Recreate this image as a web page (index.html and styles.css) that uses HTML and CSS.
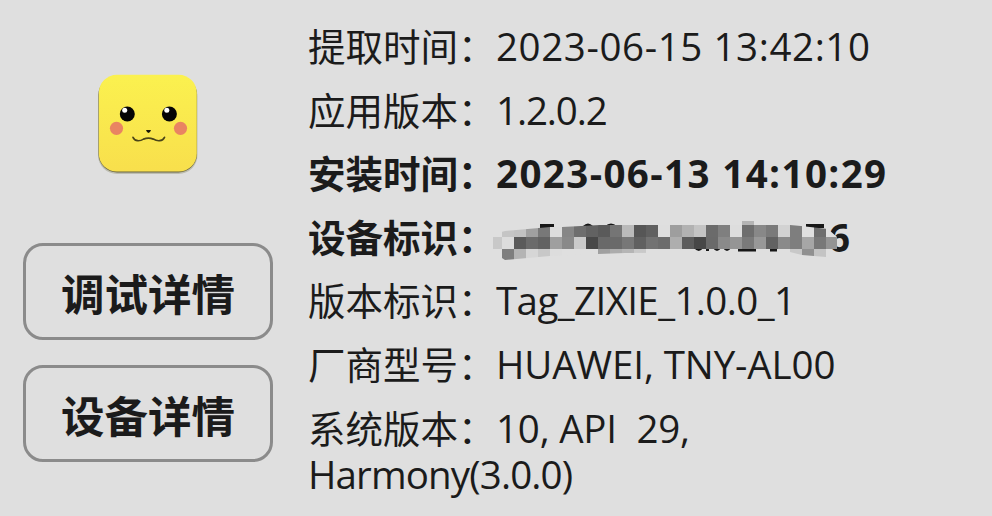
FILE: index.html
```html
<!DOCTYPE html>
<html lang="zh-CN">
<head>
<meta charset="utf-8">
<title>应用详情</title>
<link rel="stylesheet" href="styles.css">
</head>
<body>
<main class="card">
  <aside class="side">
    <svg class="app-icon" viewBox="0 0 104 104" aria-hidden="true">
      <defs>
        <linearGradient id="face" x1="0" y1="0" x2="0" y2="1"><stop offset="0" stop-color="#fbf14f"/><stop offset="1" stop-color="#f8df4c"/></linearGradient>
      </defs>
      <rect x="2" y="4" width="99.5" height="97" rx="19" fill="#bdbdb0"/>
      <rect x="2.5" y="3" width="98.5" height="96.5" rx="18.5" fill="#67633f"/>
      <rect x="2.8" y="1.8" width="98" height="96.8" rx="18" fill="url(#face)"/>
      <circle cx="31.3" cy="41" r="7.5" fill="#050505"/><circle cx="73.4" cy="41" r="7.5" fill="#050505"/>
      <circle cx="28.7" cy="37.3" r="2.5" fill="#fff"/><circle cx="70.8" cy="37.3" r="2.5" fill="#fff"/>
      <circle cx="20.5" cy="55.3" r="6.6" fill="#e98462"/><circle cx="84.5" cy="55.3" r="6.6" fill="#e98462"/>
      <path d="M50 57h5l-1 2-1.5 1-1.5-1z" fill="#17150a"/>
      <path d="M37 64.3c2 4.5 7 4 10.5 1.8q5-2 9.8 0c4 2.400 9.200 2.500 11.200-1.800" fill="none" stroke="#4a4418" stroke-width="1.7" stroke-linecap="round"/>
    </svg>
    <button class="action">调试详情</button>
    <button class="action">设备详情</button>
  </aside>
  <section class="info">
    <div class="row"><span class="label">提取时间：</span><span class="value date">2023-06-15 13:42:10</span></div>
    <div class="row"><span class="label">应用版本：</span><span class="value version">1.2.0.2</span></div>
    <div class="row strong"><span class="label">安装时间：</span><span class="value date">2023-06-13 14:10:29</span></div>
    <div class="row strong"><span class="label">设备标识：</span><span class="value masked"><span>6</span>
      <svg class="mosaic" viewBox="490 210 350 60" shape-rendering="crispEdges" aria-hidden="true">
        <defs><clipPath id="stroke"><path d="M493 249V236L498 233 505 231 550 227 562 227 600 225H790L801 226 828 229 837 237V249L826 250V257L802 255 790 252 625 253 598 254 550 256 505 260 502 258V249Z"/></clipPath></defs>
        <g fill="#171717" shape-rendering="auto"><path d="M540 224h14v4h-14zM806 224h18v4h-18zM738 249h18v2.500h-18zM770 249h7v2.500h-7z"/><path d="M583 226q5-5 10 0zM605 226q6-5 12 0zM694 248q5 6 9 0h3v3h3v-3h4q4 6 8 0h2q4 6 8 0z"/></g>
        <g clip-path="url(#stroke)" id="tiles"></g>
        <path d="M742 221h12v4h-12z" fill="#b4b4b4"/>
      </svg></span></div>
    <div class="row"><span class="label">版本标识：</span><span class="value tag">Tag_ZIXIE_1.0.0_1</span></div>
    <div class="row"><span class="label">厂商型号：</span><span class="value model">HUAWEI, TNY-AL00</span></div>
    <div class="row last"><span class="label">系统版本：</span><span class="value system">10, API&nbsp; 29,</span></div>
    <div class="row harmony">Harmony(3.0.0)</div>
  </section>
</main>
<script src="mosaic.js"></script>
</body>
</html>
```
FILE: styles.css
```css
* { box-sizing: border-box; }
body { margin: 0; background: #dfdfdf; color: #1b1b1b; font-family: "Open Sans", "Noto Sans CJK SC", sans-serif; }
.card { display: flex; width: 992px; height: 516px; overflow: hidden; }
.side { width: 308px; flex: none; padding: 72px 0 0 23px; display: flex; flex-direction: column; }
.app-icon { width: 104px; height: 104px; margin: 1px 0 66px 73px; flex: none; }
.action { width: 250px; height: 97px; flex: none; margin: 0 0 25px; padding: 2px 0 0; border: 3px solid #8b8b8b; border-radius: 20px; background: none; color: #1b1b1b; font: 700 43.5px/1 "Noto Sans CJK SC", sans-serif; }
.info { padding-top: 15px; width: 684px; }
.row { display: flex; height: 63.6px; line-height: 63.6px; white-space: nowrap; font-size: 38.5px; }
.label { flex: none; width: 188px; margin-top: -2px; font-family: "Noto Sans CJK SC", sans-serif; font-size: 37.5px; }
.strong { font-weight: 700; }
.date { letter-spacing: 0.6px; }
.strong .date { letter-spacing: 1.4px; }
.version { letter-spacing: -1.1px; }
.tag { letter-spacing: -0.6px; }
.model { letter-spacing: -0.1px; }
.system { letter-spacing: -0.2px; }
.masked { position: relative; padding-left: 332px; }
.mosaic { position: absolute; left: -6px; top: 4px; width: 350px; height: 60px; }
.last { height: 53px; }
.harmony { height: 46px; line-height: 46px; letter-spacing: -0.85px; }
.last + .harmony { margin-top: 1px; }
```
FILE: mosaic.js
```js
const rows = [
  [502, 225, "c5 c2 a0 78 dd 86 6e 62 5a 75 ba 56 60 de 9e b2 c4 6b 7f dd 6e 88 7a d2 7e df 6e df"],
  [490, 237, "c8 dc 5a 6b 62 9f 89 ca 48 69 6a 77 60 72 6c ae 5c 47 6a 8a 95 7a 98 62 8a 7e a6 78 94"],
  [502, 249, "7e b4 d6 c8 dd df df df a0 ac b5 c9"],
  [790, 249, "c8 90 c4"]
];
const tiles = document.getElementById("tiles");
for (const [x, y, shades] of rows) {
  shades.split(" ").forEach((shade, i) => {
    const tile = document.createElementNS("http://www.w3.org/2000/svg", "rect");
    tile.setAttribute("x", x + i * 12);
    tile.setAttribute("y", y);
    tile.setAttribute("width", 12);
    tile.setAttribute("height", 12);
    tile.setAttribute("fill", "#" + shade.repeat(3));
    tiles.append(tile);
  });
}
```
